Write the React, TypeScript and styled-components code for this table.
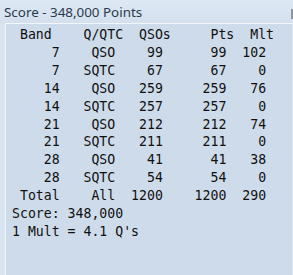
import React from "react";
import styled, { createGlobalStyle } from "styled-components";

const Global = createGlobalStyle`
  html, body { margin: 0; padding: 0; width: 293px; height: 275px; overflow: hidden; }
  #root { width: 293px; height: 275px; }
`;

const Window = styled.div`
  width: 293px;
  height: 275px;
  display: flex;
  flex-direction: column;
  background: #d9e4f1;
  overflow: hidden;
`;

const TitleBar = styled.div`
  height: 23px;
  flex: none;
  display: flex;
  align-items: center;
  justify-content: space-between;
  padding-left: 4px;
  background: linear-gradient(#dde8f4, #d4e0ee);
  font-family: "Noto Sans", "Open Sans", sans-serif;
  font-size: 13.4px;
  color: #2a3a4e;
`;

const TitleText = styled.span`
  line-height: 23px;
  padding-top: 1px;
`;

const ButtonEdge = styled.span`
  width: 2px;
  height: 10px;
  margin-top: 4px;
  background: #8d96a3;
`;

const Body = styled.div`
  flex: 1;
  display: flex;
  padding-left: 5px;
`;

const Panel = styled.div`
  flex: 1;
  background: #cedbea;
  border-top: 1px solid #f2f6fb;
  border-left: 1px solid #eef3f9;
  border-right: 1px solid #dde6f1;
  padding: 2px 0 0 6px;
`;

const Listing = styled.pre`
  margin: 0;
  font-family: "DejaVu Sans Mono", "Liberation Mono", monospace;
  font-size: 13.2px;
  line-height: 17.9px;
  color: #101010;
`;

const rows: [string, string, number, number, number][] = [
  ["7", "QSO", 99, 99, 102],
  ["7", "SQTC", 67, 67, 0],
  ["14", "QSO", 259, 259, 76],
  ["14", "SQTC", 257, 257, 0],
  ["21", "QSO", 212, 212, 74],
  ["21", "SQTC", 211, 211, 0],
  ["28", "QSO", 41, 41, 38],
  ["28", "SQTC", 54, 54, 0],
];

const line = (a: string, b: string, c: string, d: string, e: string) =>
  a.padStart(6) + b.padStart(7) + c.padStart(6) + d.padStart(8) + e.padStart(5);

export default function App() {
  const text = [
    " Band    Q/QTC  QSOs     Pts  Mlt",
    ...rows.map(([b, t, q, p, m]) => line(b, t, String(q), String(p), String(m))),
    line("Total", "All", "1200", "1200", "290"),
    "Score: 348,000",
    "1 Mult = 4.1 Q's",
  ].join("\n");
  return (
    <>
      <Global />
      <Window>
        <TitleBar>
          <TitleText>Score - 348,000 Points</TitleText>
          <ButtonEdge />
        </TitleBar>
        <Body>
          <Panel>
            <Listing>{text}</Listing>
          </Panel>
        </Body>
      </Window>
    </>
  );
}
